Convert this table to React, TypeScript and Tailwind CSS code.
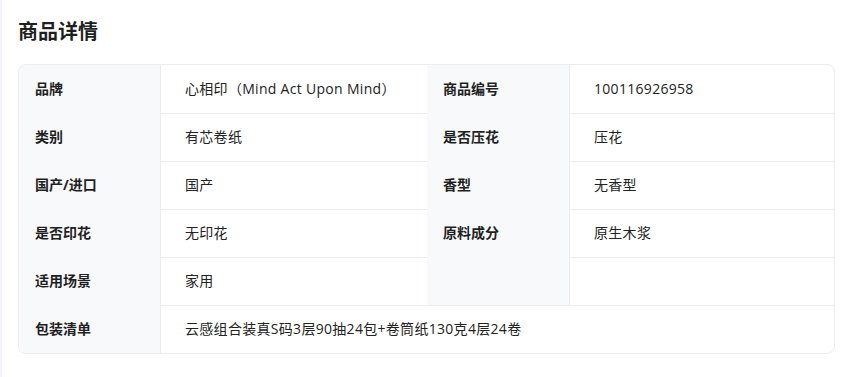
import React from 'react';

interface Row {
  label: string;
  value: string;
  label2?: string;
  value2?: string;
  wide?: boolean;
}

const rows: Row[] = [
  { label: '品牌', value: '心相印（Mind Act Upon Mind）', label2: '商品编号', value2: '100116926958' },
  { label: '类别', value: '有芯卷纸', label2: '是否压花', value2: '压花' },
  { label: '国产/进口', value: '国产', label2: '香型', value2: '无香型' },
  { label: '是否印花', value: '无印花', label2: '原料成分', value2: '原生木浆' },
  { label: '适用场景', value: '家用', label2: '', value2: '' },
  { label: '包装清单', value: '云感组合装真S码3层90抽24包+卷筒纸130克4层24卷', wide: true },
];

const labelCls =
  'h-12 flex items-center pl-4 pb-px bg-[#f8f9fb] border-r border-[#ededf0] text-sm leading-5 font-bold text-[#1f1f1f]';
const valueCls = 'h-12 flex items-center pl-6 pb-px text-sm leading-5 tracking-[0.3px] text-[#222]';

const App: React.FC = () => {
  return (
    <div
      className="min-h-[377px] bg-white border-l-2 border-[#f3f4f9] pl-4 pr-[15px] pt-[18px]"
      style={{ fontFamily: '"Open Sans", "Noto Sans CJK SC", sans-serif' }}
    >
      <h2 className="text-xl leading-7 font-bold text-[#1f1f1f] mb-[18px]">商品详情</h2>

      <div className="border border-[#ececef] rounded-lg overflow-hidden grid grid-cols-[142fr_266fr_143fr_264fr]">
        {rows.map((row, i) => {
          const top = i === 0 ? '' : ' border-t border-[#ededf0]';
          if (row.wide) {
            return (
              <React.Fragment key={row.label}>
                <div className={labelCls}>{row.label}</div>
                <div className={valueCls + ' col-span-3' + top}>{row.value}</div>
              </React.Fragment>
            );
          }
          return (
            <React.Fragment key={row.label}>
              <div className={labelCls}>{row.label}</div>
              <div className={valueCls + top}>{row.value}</div>
              <div className={labelCls}>{row.label2}</div>
              <div className={valueCls + top}>{row.value2}</div>
            </React.Fragment>
          );
        })}
      </div>
    </div>
  );
};

export default App;
